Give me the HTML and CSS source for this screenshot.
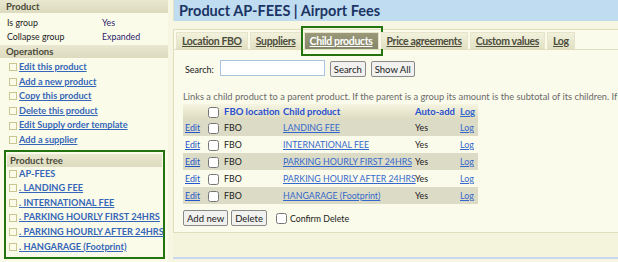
FILE: index.html
```html
<!DOCTYPE html>
<html lang="en">
<head>
    <meta charset="UTF-8">
    <title>Product AP-FEES | Airport Fees</title>
    <link rel="stylesheet" href="styles.css">
</head>
<body>
<div class="page">
    <div class="sidebar">
        <div class="side-head">Product</div>
        <div class="props">
            <div class="prop"><span class="prop-name">Is group</span><span class="prop-val">Yes</span></div>
            <div class="prop"><span class="prop-name">Collapse group</span><span class="prop-val">Expanded</span></div>
        </div>
        <div class="side-head">Operations</div>
        <ul class="side-list">
            <li><a href="#">Edit this product</a></li>
            <li><a href="#">Add a new product</a></li>
            <li><a href="#">Copy this product</a></li>
            <li><a href="#">Delete this product</a></li>
            <li><a href="#">Edit Supply order template</a></li>
            <li><a href="#">Add a supplier</a></li>
        </ul>
        <div class="tree-box">
            <div class="side-head">Product tree</div>
            <ul class="side-list tree">
                <li><a href="#" class="plain">AP-FEES</a></li>
                <li><a href="#">. LANDING FEE</a></li>
                <li><a href="#">. INTERNATIONAL FEE</a></li>
                <li><a href="#">. PARKING HOURLY FIRST 24HRS</a></li>
                <li><a href="#">. PARKING HOURLY AFTER 24HRS</a></li>
                <li><a href="#">. HANGARAGE (Footprint)</a></li>
            </ul>
        </div>
    </div>

    <div class="main">
        <div class="title">Product AP-FEES | Airport Fees</div>
        <div class="panel">
            <div class="tabs">
                <a href="#" class="tab">Location FBO</a>
                <a href="#" class="tab">Suppliers</a>
                <a href="#" class="tab active">Child products</a>
                <a href="#" class="tab">Price agreements</a>
                <a href="#" class="tab">Custom values</a>
                <a href="#" class="tab">Log</a>
            </div>
            <div class="content">
                <div class="search-row">
                    <label for="search">Search:</label>
                    <input type="text" id="search" class="search-input">
                    <button class="btn">Search</button>
                    <button class="btn">Show All</button>
                </div>
                <p class="hint">Links a child product to a parent product. If the parent is a group its amount is the subtotal of its children. If the parent is not a group its amount is added.</p>
                <table class="grid">
                    <colgroup>
                        <col class="c-edit">
                        <col class="c-check">
                        <col class="c-loc">
                        <col class="c-child">
                        <col class="c-auto">
                        <col class="c-log">
                    </colgroup>
                    <thead>
                        <tr>
                            <th></th>
                            <th><input type="checkbox"></th>
                            <th>FBO location</th>
                            <th>Child product</th>
                            <th>Auto-add</th>
                            <th><a href="#">Log</a></th>
                        </tr>
                    </thead>
                    <tbody>
                        <tr class="alt">
                            <td><a href="#" class="edit">Edit</a></td>
                            <td><input type="checkbox"></td>
                            <td>FBO</td>
                            <td><a href="#">LANDING FEE</a></td>
                            <td>Yes</td>
                            <td><a href="#">Log</a></td>
                        </tr>
                        <tr>
                            <td><a href="#" class="edit">Edit</a></td>
                            <td><input type="checkbox"></td>
                            <td>FBO</td>
                            <td><a href="#">INTERNATIONAL FEE</a></td>
                            <td>Yes</td>
                            <td><a href="#">Log</a></td>
                        </tr>
                        <tr class="alt">
                            <td><a href="#" class="edit">Edit</a></td>
                            <td><input type="checkbox"></td>
                            <td>FBO</td>
                            <td><a href="#">PARKING HOURLY FIRST 24HRS</a></td>
                            <td>Yes</td>
                            <td><a href="#">Log</a></td>
                        </tr>
                        <tr>
                            <td><a href="#" class="edit">Edit</a></td>
                            <td><input type="checkbox"></td>
                            <td>FBO</td>
                            <td><a href="#">PARKING HOURLY AFTER 24HRS</a></td>
                            <td>Yes</td>
                            <td><a href="#">Log</a></td>
                        </tr>
                        <tr class="alt">
                            <td><a href="#" class="edit">Edit</a></td>
                            <td><input type="checkbox"></td>
                            <td>FBO</td>
                            <td><a href="#">HANGARAGE (Footprint)</a></td>
                            <td>Yes</td>
                            <td><a href="#">Log</a></td>
                        </tr>
                    </tbody>
                </table>
                <div class="actions">
                    <button class="btn">Add new</button>
                    <button class="btn">Delete</button>
                    <label class="confirm"><input type="checkbox"> Confirm Delete</label>
                </div>
            </div>
        </div>
        <div class="footer"></div>
    </div>
</div>
</body>
</html>
```

FILE: styles.css
```css
body {
    margin: 0;
    font-family: Lato, "Liberation Sans", sans-serif;
    font-size: 8.8px;
    color: #1a1a1a;
    background-color: #f6f6e2;
    overflow: hidden;
}
a {
    color: #2f5fc4;
}
.page {
    display: flex;
    height: 262px;
}

/* sidebar */
.sidebar {
    width: 168px;
    background-color: #fbfbea;
    flex-shrink: 0;
    white-space: nowrap;
}
.side-head {
    height: 13px;
    line-height: 13px;
    padding-left: 6px;
    font-size: 9.5px;
    font-weight: bold;
    color: #4a4a3a;
    background: linear-gradient(#e9e8d0, #dcdbbf);
}
.props {
    padding: 3px 0 1px 7px;
}
.prop {
    display: flex;
    line-height: 14px;
}
.prop-name {
    width: 95px;
}
.prop-val {
    color: #2c1c6c;
}
.side-list {
    list-style: none;
    margin: 0;
    padding: 2px 0 2px 9px;
}
.side-list li {
    display: flex;
    align-items: center;
    line-height: 14.6px;
}
.side-list li::before {
    content: "";
    width: 6px;
    height: 6px;
    border: 1px solid #c9c68f;
    background-color: #fbfbea;
    margin-right: 2px;
    flex-shrink: 0;
}
.side-list a {
    font-size: 9.2px;
    font-weight: bold;
    color: #3566b8;
}
.side-list a.plain {
    text-decoration: none;
}
.tree-box {
    margin: 0 3px 0 4px;
    border: 2px solid #23730f;
    padding-top: 2px;
}
.tree-box .side-head {
    margin: 0 1px;
    padding-left: 3px;
}
.tree {
    padding: 0 0 3px 3px;
}

/* main area */
.main {
    flex: 1;
    display: flex;
    flex-direction: column;
    margin-left: 5px;
    min-width: 0;
}
.title {
    height: 21px;
    line-height: 21px;
    padding-left: 5px;
    background-color: #bfdcf0;
    border-left: 1px solid #e2e2c8;
    font-size: 14.5px;
    font-weight: bold;
    color: #1b3463;
    white-space: nowrap;
}
.panel {
    margin-top: 8px;
    border: 1px solid #e0dfbd;
    border-right: none;
    background-color: #fbfbeb;
    height: 202px;
}
.tabs {
    display: flex;
    gap: 2px;
    padding: 2px 0 0 2px;
    border-bottom: 1px solid #e0dfbd;
}
.tab {
    position: relative;
    height: 16px;
    line-height: 16px;
    padding: 0 5px;
    font-size: 10.5px;
    font-weight: bold;
    letter-spacing: -0.35px;
    color: #4d4d3d;
    background: linear-gradient(#f2f1dc, #e1e0c3);
    border: 1px solid #e6e5cc;
    border-bottom: none;
    white-space: nowrap;
}
.tab.active {
    color: #fff;
    background: linear-gradient(#9a9a7a, #85856a);
}
.tab.active::after {
    content: "";
    position: absolute;
    top: -7px;
    left: -4px;
    right: -5px;
    bottom: -7px;
    border: 2px solid #23730f;
}
.content {
    padding: 11px 9px 0 9px;
}
.search-row {
    display: flex;
    align-items: center;
    gap: 5px;
}
.search-row label {
    margin: 0 1px 0 2px;
    font-size: 9px;
}
.search-input {
    width: 101px;
    height: 12px;
    border: 1px solid #a9c4e4;
    padding: 1px;
    margin-top: -2px;
}
.btn {
    font-family: inherit;
    font-size: 9.5px;
    color: #1a1a1a;
    height: 16px;
    padding: 0 3px;
    line-height: 13px;
    background-color: #f1f1ef;
    border: 1px solid #8a8a8a;
    border-radius: 2px;
}
.hint {
    margin: 14px 0 0 0;
    font-size: 9.3px;
    color: #6a6a6a;
    white-space: nowrap;
    line-height: 12px;
}

/* table */
.grid {
    border-collapse: collapse;
    table-layout: fixed;
    width: 295px;
    margin-top: 1px;
}
.c-edit { width: 22px; }
.c-check { width: 17px; }
.c-loc { width: 59px; }
.c-child { width: 132px; }
.c-auto { width: 45px; }
.c-log { width: 20px; }
.grid th,
.grid td {
    padding: 0 2px;
    text-align: left;
    white-space: nowrap;
    overflow: visible;
}
.grid th {
    height: 15px;
    font-size: 9.5px;
    font-weight: bold;
    color: #2a4fcf;
    background: linear-gradient(#f6f5e2, #dddbbf);
}
.grid td {
    height: 17px;
}
.grid tr.alt td {
    background-color: #dcdbc6;
}
.grid input[type="checkbox"] {
    width: 11px;
    height: 11px;
    margin: 0 0 0 1px;
    vertical-align: middle;
}
.grid a {
    color: #3468cc;
}
.grid a.edit {
    color: #2457c9;
}
.actions {
    display: flex;
    align-items: center;
    gap: 3px;
    margin-top: 6px;
}
.confirm {
    display: flex;
    align-items: center;
    margin-left: 6px;
}
.confirm input {
    width: 11px;
    height: 11px;
    margin: 0 3px 0 0;
}
.footer {
    height: 24px;
    background-color: #f4f3dc;
    border-bottom: 2px solid #c6d9ef;
}
```
